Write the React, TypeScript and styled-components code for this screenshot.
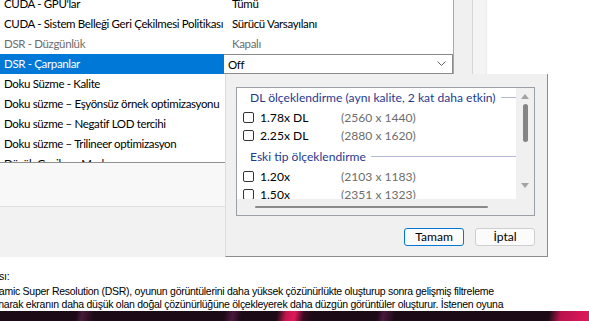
import React from 'react';
import styled, { createGlobalStyle } from 'styled-components';

const GlobalStyle = createGlobalStyle`
  html, body {
    margin: 0;
    padding: 0;
    background: #fff;
  }
  body {
    width: 589px;
    height: 321px;
    overflow: hidden;
    font-family: Lato, "Noto Sans", sans-serif;
  }
`;

const Page = styled.div`
  position: relative;
  width: 589px;
  height: 321px;
  overflow: hidden;
  display: flex;
  flex-direction: column;
  background: #fff;
`;

const Top = styled.div`
  display: flex;
  height: 257px;
  flex-shrink: 0;
`;

const LeftPane = styled.div`
  width: 454px;
  display: flex;
  flex-direction: column;
`;

const SettingsList = styled.div`
  height: 163px;
  overflow: hidden;
  box-sizing: border-box;
  border-right: 1px solid #a8a8a8;
  border-bottom: 1px solid #8f8f8f;
  background: #fff;
  font-size: 11.5px;
  letter-spacing: -0.35px;
`;

const Rows = styled.div`
  margin-top: -6px;
`;

const Row = styled.div`
  display: flex;
  height: 20px;
`;

const NameCell = styled.div<{ $selected?: boolean; $disabled?: boolean }>`
  width: 224px;
  flex-shrink: 0;
  box-sizing: border-box;
  padding-left: 4px;
  line-height: 20px;
  white-space: nowrap;
  overflow: hidden;
  background: ${(p) => (p.$selected ? '#0078d7' : 'transparent')};
  color: ${(p) => (p.$selected ? '#fff' : p.$disabled ? '#6d6d6d' : '#000')};
`;

const ValueCell = styled.div<{ $disabled?: boolean }>`
  flex: 1;
  padding-left: 8px;
  line-height: 20px;
  white-space: nowrap;
  color: ${(p) => (p.$disabled ? '#6d6d6d' : '#000')};
`;

const Combo = styled.div`
  flex: 1;
  display: flex;
  align-items: center;
  justify-content: space-between;
  box-sizing: border-box;
  border: 1px solid #8a8a8a;
  border-left: none;
  padding: 0 6px 0 4px;
  background: #fff;
  color: #000;
`;

const Gutter = styled.div`
  width: 33px;
  display: flex;
`;

const GutterTrack = styled.div`
  width: 18px;
  background: #f0f0f0;
  border-right: 1px solid #d6d6d6;
`;

const GutterEdge = styled.div`
  flex: 1;
  background: #f4f4f4;
  border-right: 1px solid #ececec;
`;

const FooterUpper = styled.div`
  height: 43px;
  background: #f8f8f8;
  border-bottom: 1px solid #e2e2e2;
`;

const FooterLower = styled.div`
  flex: 1;
  background: #f2f2f2;
`;

const Blank = styled.div`
  flex: 1;
  background: #fff;
`;

/* dropdown popup of the DSR factors combo */
const Popup = styled.div`
  position: absolute;
  left: 225px;
  top: 74px;
  width: 323px;
  height: 183px;
  box-sizing: border-box;
  background: #f0f0f0;
  border-left: 1px solid #dcdcdc;
  border-right: 1px solid #8c8c8c;
  border-bottom: 1px solid #8c8c8c;
  padding: 13px 12px 0 10px;
  display: flex;
  flex-direction: column;
  font-size: 12.1px;
`;

const ListFrame = styled.div`
  height: 129px;
  box-sizing: border-box;
  border: 1px solid #9a9ea6;
  display: flex;
`;

const ListMain = styled.div`
  flex: 1;
  display: flex;
  flex-direction: column;
`;

const ListView = styled.div`
  height: 111px;
  overflow: hidden;
  background: #fff;
`;

const HScroll = styled.div`
  flex: 1;
  background: #f0f0f0;
  display: flex;
  align-items: center;
  padding-left: 18px;
`;

const HThumb = styled.div`
  width: 233px;
  height: 2px;
  background: #8a8a8a;
  border-radius: 1px;
`;

const VScroll = styled.div`
  width: 18px;
  background: #f0f0f0;
  display: flex;
  flex-direction: column;
  align-items: center;
  padding-top: 6px;
  box-sizing: border-box;
`;

const Arrow = styled.div<{ $down?: boolean }>`
  width: 0;
  height: 0;
  border-left: 4px solid transparent;
  border-right: 4px solid transparent;
  ${(p) =>
    p.$down
      ? 'border-top: 5px solid #a3a3a3;'
      : 'border-bottom: 5px solid #a3a3a3;'}
`;

const VThumb = styled.div`
  width: 5px;
  height: 38px;
  margin-top: 5px;
  border-radius: 3px;
  background: #858585;
`;

const VSpacer = styled.div`
  height: 41px;
`;

const GroupHeading = styled.div<{ $gapTop?: number }>`
  display: flex;
  align-items: center;
  height: 19px;
  padding-left: 13px;
  margin-top: ${(p) => p.$gapTop ?? 0}px;
  color: #1f3a8f;
  white-space: nowrap;
`;

const HeadingRule = styled.div`
  flex: 1;
  height: 1px;
  margin-left: 5px;
  background: #b3b8d4;
`;

const OptionRow = styled.div<{ $gapTop?: number }>`
  display: flex;
  align-items: center;
  height: 18px;
  padding-left: 6px;
  margin-top: ${(p) => p.$gapTop ?? 0}px;
  white-space: nowrap;
`;

const Check = styled.span`
  width: 11px;
  height: 11px;
  box-sizing: border-box;
  border: 1px solid #333;
  border-radius: 2px;
  background: #fff;
  margin-right: 6px;
  flex-shrink: 0;
`;

const OptionLabel = styled.span`
  width: 81px;
  flex-shrink: 0;
  color: #000;
`;

const OptionRes = styled.span`
  color: #6d6d6d;
`;

const ButtonRow = styled.div`
  display: flex;
  justify-content: flex-end;
  gap: 11px;
  margin-top: 12px;
`;

const DialogButton = styled.button<{ $primary?: boolean }>`
  width: 60px;
  height: 18px;
  box-sizing: border-box;
  padding: 0;
  font: inherit;
  font-size: 12.1px;
  line-height: 14px;
  color: #000;
  border-radius: 3px;
  border: 1px solid ${(p) => (p.$primary ? '#0078d7' : '#cfcfcf')};
  background: #fbfbfb;
`;

const Description = styled.div`
  height: 54px;
  padding-top: 13px;
  box-sizing: border-box;
  overflow: hidden;
  font-family: "Liberation Sans", Arial, sans-serif;
  font-size: 10.5px;
  letter-spacing: -0.27px;
  line-height: 13px;
  color: #000;
`;

const DescLine = styled.div<{ $shift: number; $gapTop?: number }>`
  white-space: nowrap;
  margin-left: -${(p) => p.$shift}px;
  margin-top: ${(p) => p.$gapTop ?? 0}px;
`;

const Wallpaper = styled.div`
  flex: 1;
  background:
    linear-gradient(100deg, transparent 0 13%, rgba(110, 40, 90, 0.55) 14%, transparent 16%,
      transparent 38%, rgba(120, 40, 100, 0.5) 39.5%, transparent 41%,
      transparent 47%, #c0164f 48.5%, #e01a5c 50%, #3a0a22 51.5%, transparent 53%,
      transparent 64%, rgba(120, 40, 100, 0.5) 65%, transparent 67%,
      transparent 93%, #b8124c 95%, #e0195c 100%),
    #1c0a16;
`;

interface ISetting {
  name: string;
  value: string;
  disabled?: boolean;
  selected?: boolean;
}

const settings: ISetting[] = [
  { name: "CUDA - GPU'lar", value: 'Tümü' },
  { name: 'CUDA - Sistem Belleği Geri Çekilmesi Politikası', value: 'Sürücü Varsayılanı' },
  { name: 'DSR - Düzgünlük', value: 'Kapalı', disabled: true },
  { name: 'DSR - Çarpanlar', value: 'Off', selected: true },
  { name: 'Doku Süzme - Kalite', value: 'Kalite' },
  { name: 'Doku süzme – Eşyönsüz örnek optimizasyonu', value: 'Kapalı' },
  { name: 'Doku süzme – Negatif LOD tercihi', value: 'İzin ver' },
  { name: 'Doku süzme – Trilineer optimizasyon', value: 'Açık' },
  { name: 'Düşük Gecikme Modu', value: 'Kapalı' },
];

interface IOption {
  label: string;
  res: string;
}

const dlOptions: IOption[] = [
  { label: '1.78x DL', res: '(2560 x 1440)' },
  { label: '2.25x DL', res: '(2880 x 1620)' },
];

const legacyOptions: IOption[] = [
  { label: '1.20x', res: '(2103 x 1183)' },
  { label: '1.50x', res: '(2351 x 1323)' },
];

const Chevron = () => (
  <svg width="9" height="6" viewBox="0 0 9 6">
    <path d="M0.5 0.5 L4.5 4.5 L8.5 0.5" fill="none" stroke="#606060" strokeWidth="1" />
  </svg>
);

const OptionList = ({ options }: { options: IOption[] }) => (
  <>
    {options.map((o, i) => (
      <OptionRow key={o.label} $gapTop={i === 0 ? 1 : 0}>
        <Check />
        <OptionLabel>{o.label}</OptionLabel>
        <OptionRes>{o.res}</OptionRes>
      </OptionRow>
    ))}
  </>
);

const App = () => (
  <>
    <GlobalStyle />
    <Page>
      <Top>
        <LeftPane>
          <SettingsList>
            <Rows>
              {settings.map((s) => (
                <Row key={s.name}>
                  <NameCell $selected={s.selected} $disabled={s.disabled}>
                    {s.name}
                  </NameCell>
                  {s.selected ? (
                    <Combo>
                      {s.value}
                      <Chevron />
                    </Combo>
                  ) : (
                    <ValueCell $disabled={s.disabled}>{s.value}</ValueCell>
                  )}
                </Row>
              ))}
            </Rows>
          </SettingsList>
          <FooterUpper />
          <FooterLower />
        </LeftPane>
        <Gutter>
          <GutterTrack />
          <GutterEdge />
        </Gutter>
        <Blank />
      </Top>

      <Description>
        <DescLine $shift={42}>Açıklaması:</DescLine>
        <DescLine $shift={19} $gapTop={2}>
          Dynamic Super Resolution (DSR), oyunun görüntülerini daha yüksek çözünürlükte oluşturup sonra gelişmiş filtreleme
        </DescLine>
        <DescLine $shift={22}>
          kullanarak ekranın daha düşük olan doğal çözünürlüğüne ölçekleyerek daha düzgün görüntüler oluşturur. İstenen oyuna
        </DescLine>
      </Description>
      <Wallpaper />

      <Popup>
        <ListFrame>
          <ListMain>
            <ListView>
              <GroupHeading>
                DL ölçeklendirme (aynı kalite, 2 kat daha etkin)
                <HeadingRule />
              </GroupHeading>
              <OptionList options={dlOptions} />
              <GroupHeading $gapTop={3}>
                Eski tip ölçeklendirme
                <HeadingRule />
              </GroupHeading>
              <OptionList options={legacyOptions} />
            </ListView>
            <HScroll>
              <HThumb />
            </HScroll>
          </ListMain>
          <VScroll>
            <Arrow />
            <VThumb />
            <VSpacer />
            <Arrow $down />
          </VScroll>
        </ListFrame>
        <ButtonRow>
          <DialogButton $primary>Tamam</DialogButton>
          <DialogButton>İptal</DialogButton>
        </ButtonRow>
      </Popup>
    </Page>
  </>
);

export default App;
